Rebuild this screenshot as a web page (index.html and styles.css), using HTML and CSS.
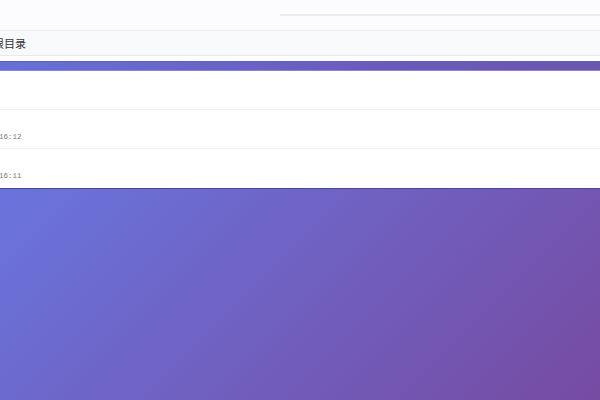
FILE: index.html
```html
<!DOCTYPE html>
<html lang="zh">
<head>
<meta charset="utf-8">
<title>根目录</title>
<link rel="stylesheet" href="styles.css">
</head>
<body>
<div class="page">
  <div class="topbar"><div class="search-line"></div></div>
  <div class="crumb"><span class="crumb-text">根目录</span></div>
  <div class="spacer"></div>
  <div class="band"></div>
  <div class="rows">
    <div class="row"></div>
    <div class="row"><span class="time">16:12</span></div>
    <div class="row last"><span class="time">16:11</span></div>
  </div>
</div>
</body>
</html>
```
FILE: styles.css
```css
html, body {
  margin: 0;
  height: 100%;
}
body {
  background: linear-gradient(135deg, #667eea 0%, #764ba2 100%);
  font-family: "Liberation Sans", "Noto Sans CJK SC", sans-serif;
}
.page {
  display: flex;
  flex-direction: column;
}
.topbar {
  height: 30px;
  background: #fcfcfe;
  display: flex;
  flex-direction: column;
  justify-content: center;
}
.search-line {
  margin-left: 280px;
  height: 2px;
  background: #ececef;
}
.crumb {
  height: 24px;
  background: #f8f9fa;
  border-top: 1px solid #ebedf0;
  border-bottom: 1px solid #e6e8eb;
  display: flex;
  align-items: center;
  overflow: hidden;
}
.crumb-text {
  margin-left: -7px;
  font-size: 11px;
  color: #333;
  white-space: nowrap;
}
.spacer {
  height: 5px;
  background: #ffffff;
}
.band {
  box-sizing: border-box;
  height: 10px;
  background: linear-gradient(90deg, #6670d6 0%, #6a5cbc 60%, #6b55ad 100%);
  border-top: 1px solid #5c62c0;
  border-bottom: 1px solid #8b84d6;
}
.rows {
  background: #ffffff;
  border-bottom: 1px solid #4f4690;
}
.row {
  height: 38px;
  border-bottom: 1px solid #f0f0f0;
  overflow: hidden;
}
.row.last {
  height: 39px;
  border-bottom: none;
}
.time {
  display: block;
  margin-left: -1px;
  padding-top: 22px;
  font-family: "Liberation Mono", monospace;
  font-size: 7.5px;
  color: #7a7a7a;
  line-height: 10px;
}
```
